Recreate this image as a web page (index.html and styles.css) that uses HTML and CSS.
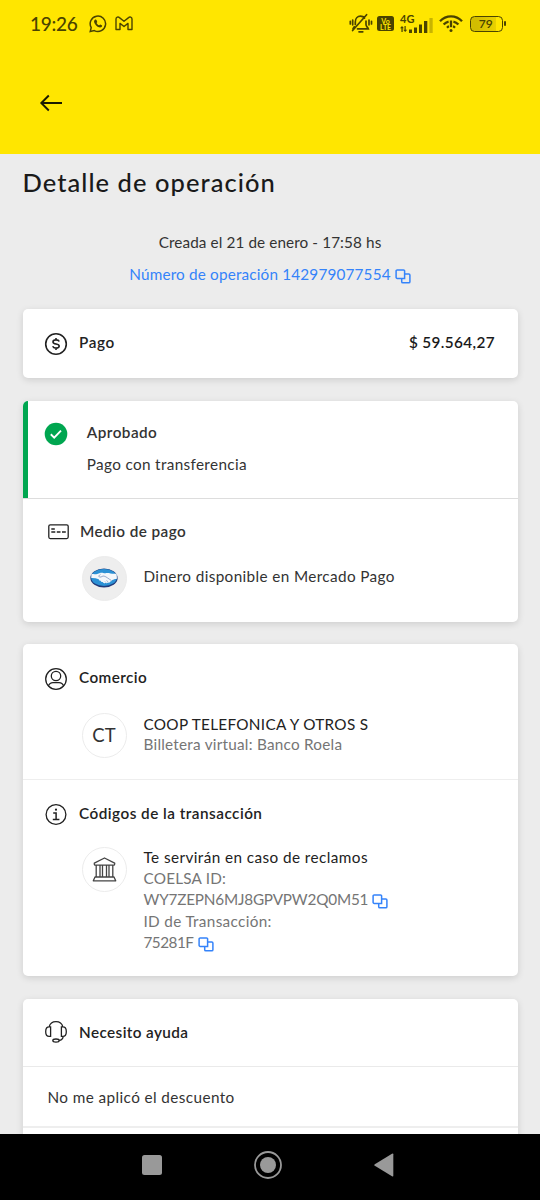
FILE: index.html
```html
<!DOCTYPE html>
<html lang="es">
<head>
<meta charset="utf-8">
<title>Detalle de operación</title>
<link rel="stylesheet" href="styles.css">
</head>
<body>
<svg class="defs" width="0" height="0" aria-hidden="true">
  <symbol id="copy" viewBox="0 0 16 15">
    <path d="M9.6 9.4H2.2a1.1 1.1 0 0 1-1.1-1.1V2.1A1.1 1.1 0 0 1 2.2 1h6.300a1.1 1.1 0 0 1 1.1 1.1zM9.6 5h4.200a1.1 1.1 0 0 1 1.1 1.1v6.600a1.1 1.1 0 0 1-1.1 1.1H7.800a1.1 1.1 0 0 1-1.1-1.1V9.400" fill="none" stroke="currentColor" stroke-width="1.5"/>
  </symbol>
</svg>
<header class="top">
  <div class="status">
    <span class="time">19:26</span>
    <svg class="wa" width="18" height="18" viewBox="0 0 18 18"><path d="M1.200 16.600l1-4A7.700 7.700 0 1 1 5.300 15.600z" fill="none" stroke="currentColor" stroke-width="1.500"/><path d="M5.900 4.800c-1.500 1.100-1 3.300 1 5.400 2.100 2.200 4.600 3 5.900 1.500.5-.7.400-1.200 0-1.400l-1.500-.8c-.5-.2-.8.8-1.300.8C9 10 7.700 8.700 7.600 8c0-.4.800-.7.600-1.300l-.7-1.600c-.2-.5-1-.7-1.600-.3z" fill="currentColor"/></svg>
    <svg class="gm" width="18" height="15" viewBox="0 0 18 15"><path d="M1 13.500V3.100C1 1 3.200.5 4.400 1.600L9 5.200l4.600-3.600C14.800.5 17 1 17 3.100v10.400h-4V7.400L9 10.500 5 7.400v6.100z" fill="none" stroke="currentColor" stroke-width="1.400" stroke-linejoin="round"/></svg>
    <span class="grow"></span>
    <svg class="bell" width="24" height="21" viewBox="0 0 24 21" fill="none" stroke="currentColor" stroke-width="1.700" stroke-linecap="round"><path d="M6.300 11.500V9c0-3.600 2.200-5.900 5.200-5.900 1.700 0 3.100.700 4 1.900M17 8v3.500c0 2 1.700 2.600 2.300 4.300H8.500M4 15.800l1.300-2M3.600 17.500L17.600 1.700M10 18.800h3.800M3.700 7v4.800M1.300 8.300v2.600M20 7v4.800M22.500 8.300v2.600"/></svg>
    <span class="volte"><b>Vo</b><b>LTE</b></span>
    <span class="signal">
      <span class="g4">4G</span>
      <svg width="33" height="18" viewBox="0 0 33 18" fill="currentColor"><path d="M2 11l2 2.300H2.700V17H1.400v-3.700H0zM5.200 17l-2-2.300h1.300V11h1.200v3.700H7.200zM9 14.500h3V18H9zM14 12.500h3V18h-3zM19 9.500h3V18h-3zM24 6h3.300v12H24z"/><path d="M29.400 3h3.300v15h-3.300z" opacity=".3"/></svg>
    </span>
    <svg class="wifi" width="24" height="18" viewBox="0 0 24 18"><g fill="none" stroke="currentColor" stroke-width="2.300"><path d="M1 6.300C7-.2 17-.2 23 6.300"/><path d="M4.600 9.500C6 8 7.700 7 9.600 6.600M14.400 6.600c1.900.4 3.600 1.400 5 2.900M8 12.700c.7-.7 1.300-1.100 2-1.300M14 11.400c.7.200 1.300.6 2 1.300"/><path d="M12 5.500v6.700"/></g><circle cx="12" cy="15.500" r="1.500" fill="currentColor"/></svg>
    <span class="battery">79</span><i class="tip"></i>
  </div>
  <svg class="back" width="24" height="18" viewBox="0 0 24 18" fill="none" stroke="#1a1a00" stroke-width="1.900"><path d="M23 9H2.500M9.800 1.500L2.300 9l7.500 7.500"/></svg>
</header>
<main>
  <h1>Detalle de operación</h1>
  <p class="created">Creada el 21 de enero - 17:58 hs</p>
  <p class="opnum"><span>Número de operación 142979077554</span><svg class="copy"><use href="#copy"/></svg></p>

  <section class="card pay">
    <svg class="ic" viewBox="0 0 24 24" fill="none" stroke="#222" stroke-width="1.600"><circle cx="12" cy="12" r="10.300"/><path d="M15.200 9.500C14.800 8.300 13.500 7.900 12 7.900c-1.700 0-3 .6-3 2 0 2.900 6.200 1.200 6.200 4.200 0 1.400-1.400 2-3.200 2-1.700 0-2.900-.6-3.300-1.800M12 6v2M12 16v2"/></svg>
    <h2 class="t-pago">Pago</h2>
    <strong class="amount">$ 59.564,27</strong>
  </section>

  <section class="card method">
    <div class="approved">
      <svg class="ic" viewBox="0 0 24 24"><circle cx="12" cy="12" r="11.300" fill="#00a650"/><path d="M6.800 12.300l3.400 3.300 6.800-6.900" fill="none" stroke="#fff" stroke-width="1.900"/></svg>
      <div><h2 class="t-apr">Aprobado</h2><p class="t-trans">Pago con transferencia</p></div>
    </div>
    <div class="source">
      <div class="head"><svg class="cardic" width="21" height="16" viewBox="0 0 21 16" fill="none" stroke="#222" stroke-width="1.300"><rect x=".8" y=".8" width="19.400" height="13.800" rx="1.500"/><path d="M3.300 5h3.500M3.300 8h4M8.800 8h3.700M14 8h3.800"/></svg><h2 class="t-medio">Medio de pago</h2></div>
      <div class="item">
        <span class="avatar mp"><svg width="28" height="20" viewBox="0 0 28 20"><ellipse cx="14" cy="10" rx="13.600" ry="9.500" fill="#223a7a"/><ellipse cx="14" cy="9.500" rx="12.900" ry="8.400" fill="#2c91d5"/><path d="M1.400 5.800c3 .8 5.400.7 8.600-.8 2.500-.8 3.700.6 5.500.2 3.500-1 6.300 1.300 11.100.2l.3 5.400c-2.300.1-3.200 1-4.700 1.300-.4 1.500-1.500 1.400-2 1.300-.5 1.300-1.500 1.500-2.200 1.100-.8 1-2 .9-2.500.3-1 1-2.500.4-2.700-.7-1.200.1-2-.4-2-1.400-1.500 0-2-.7-2-1.500-2.600-.9-5-1.400-7.500-1.200z" fill="#f4f7fb"/><path d="M10.500 6.300c-1.700 1-2.200 2.600-.6 2.800 1.700.2 2.600-1.500 4.200-1 2.600.8 4.200 2.600 7.500 4.500" fill="none" stroke="#6f88b4" stroke-width=".7"/><path d="M16 14.500l-1-1M18.300 14L16.500 12.500" fill="none" stroke="#6f88b4" stroke-width=".6"/></svg></span>
        <p class="t-dinero">Dinero disponible en Mercado Pago</p>
      </div>
    </div>
  </section>

  <section class="card shop">
    <div class="block merchant">
      <div class="head"><svg class="ic" viewBox="0 0 24 24" fill="none" stroke="#222" stroke-width="1.300"><circle cx="12" cy="12" r="10.300"/><circle cx="12" cy="9" r="4.700"/><path d="M4.300 19.200c1-2.700 2.700-3.500 4.700-3.500h6c2 0 3.700.8 4.700 3.500"/></svg><h2 class="t-com">Comercio</h2></div>
      <div class="item">
        <span class="avatar ct">CT</span>
        <div><p class="dark t-coop">COOP TELEFONICA Y OTROS S</p><p class="t-bill">Billetera virtual: Banco Roela</p></div>
      </div>
    </div>
    <div class="block codes">
      <div class="head"><svg class="ic" viewBox="0 0 24 24" fill="none" stroke="#222" stroke-width="1.300"><circle cx="12" cy="11.500" r="9.900"/><path d="M9.200 9.900h2.900v6.500M8.800 16.500h6.600" stroke-width="1.500"/><circle cx="12" cy="6.700" r="1.100" fill="#222" stroke="none"/></svg><h2 class="t-cod">Códigos de la transacción</h2></div>
      <div class="item">
        <span class="avatar"><svg width="25" height="25" viewBox="0 0 25 25" fill="none" stroke="#444" stroke-width="1.300" stroke-linejoin="round"><path d="M2.300 7v-.8L12.500 1l10.200 5.200V7c0 .9-.5 1.200-1.200 1.200h-18C2.800 8.200 2.300 7.900 2.300 7zM4.200 8.500v11.300M8 8.500v11.300M10.500 8.500v11.300M14.500 8.500v11.300M17 8.500v11.300M20.800 8.500v11.300M3 20h19l1.700 3.800H1.300z"/></svg></span>
        <div class="ids"><p class="dark t-te">Te servirán en caso de reclamos</p><p class="t-coelsa">COELSA ID:</p><p><span class="t-wy">WY7ZEPN6MJ8GPVPW2Q0M51</span><svg class="copy"><use href="#copy"/></svg></p><p class="t-id">ID de Transacción:</p><p><span class="t-752">75281F</span><svg class="copy"><use href="#copy"/></svg></p></div>
      </div>
    </div>
  </section>

  <section class="card help">
    <div class="helphead"><svg class="ic" viewBox="0 0 24 24" fill="none" stroke="#222" stroke-width="1.300"><path d="M5.200 6.700C6 3.300 8.700 1.600 12 1.600S18 3.300 18.800 6.700M6.600 6.900v9.500H5.100C2.900 16.400 1.700 15 1.700 11.700s1.200-4.800 3.400-4.800zM17.400 6.900v9.500h1.500c2.200 0 3.400-1.400 3.400-4.700s-1.200-4.800-3.400-4.800zM19.200 16.600c-.4 2.600-2 3.600-4.100 3.800"/><ellipse cx="12" cy="20.600" rx="3.200" ry="1.600"/></svg><h2 class="t-nec">Necesito ayuda</h2></div>
    <p class="option t-nome">No me aplicó el descuento</p>
    <div class="next"></div>
  </section>
</main>
<nav>
  <svg width="20" height="20" viewBox="0 0 20 20"><rect width="20" height="20" rx="2.500" fill="#999"/></svg>
  <svg width="28" height="28" viewBox="0 0 28 28"><circle cx="14" cy="14" r="13" fill="none" stroke="#999" stroke-width="1.800"/><circle cx="14" cy="14" r="8" fill="#999"/></svg>
  <svg width="20" height="24" viewBox="0 0 20 24"><path d="M.8 11.200L18 .7q1.300-.7 1.300.5v21.600q0 1.200-1.300.5L.8 12.800q-1.200-.8 0-1.600z" fill="#999"/></svg>
</nav>
</body>
</html>
```
FILE: styles.css
```css
* { box-sizing: border-box; }
body {
  margin: 0;
  width: 540px;
  height: 1200px;
  overflow: hidden;
  display: flex;
  flex-direction: column;
  background: #ececec;
  font: 15.3px/21.4px Lato, "Open Sans", sans-serif;
  color: #333;
}
h1, h2, p { margin: 0; }
svg { display: block; flex: none; }
.defs { position: absolute; }

.top { height: 153.5px; flex: none; background: #ffe600; color: #4a4300; }
.status { display: flex; align-items: center; height: 47px; padding: 0 34px 0 30px; }
.time { font-size: 19px; width: 59px; letter-spacing: -.25px; font-weight: 500; }
.gm { margin-left: 8px; }
.grow { flex: 1; }
.volte {
  display: flex; flex-direction: column; justify-content: center; align-items: center;
  width: 17px; height: 15px; margin-left: 4px; border-radius: 2.5px;
  background: #4a4300; color: #ffe600; font-size: 7px; line-height: 6px;
}
.signal { position: relative; width: 33px; height: 18px; margin: 0 0 0 6px; }
.g4 { position: absolute; left: 0; top: -1px; font-size: 11px; line-height: 9px; font-weight: 700; }
.wifi { margin-left: 6px; }
.battery {
  width: 33px; height: 16px; margin-left: 7px; padding-right: 1.5px; border: 1.5px solid #4a4300; border-radius: 4.5px;
  background: linear-gradient(90deg, #d2bd00 20%, #e9d100 80%, #ffe600 80%);
  font-size: 12px; line-height: 13px; text-align: center; font-weight: 600;
}
.tip { width: 2px; height: 5px; margin-left: 1px; border-radius: 1px; background: #4a4300; }
.back { margin: 47px 0 0 39px; }

main { flex: 1; min-height: 0; overflow: hidden; padding: 12.5px 22.5px 0; }
h1 { font-size: 25.5px; line-height: 32px; font-weight: 500; letter-spacing: 1.05px; color: #1a1a1a; }
.created { margin-top: 33.5px; text-align: center; letter-spacing: .1px; }
.opnum { display: flex; justify-content: center; margin-top: 11.5px; color: #3483fa; letter-spacing: .17px; }
.copy { width: 16px; height: 15px; margin-left: 4px; margin-top: 5px; color: #3483fa; }

.card { background: #fff; border-radius: 5px; box-shadow: 0 2px 7px rgba(0, 0, 0, .13); overflow: hidden; margin-bottom: 22.5px; }
h2 { font: inherit; font-weight: 600; color: #222; }
.ic { width: 24px; height: 24px; }
.pay { display: flex; height: 69.5px; margin-top: 23px; padding: 23px 22.5px 0 21.5px; }
.pay h2, .head .ic + h2, .helphead h2 { margin-left: 11px; }
.amount { margin-left: auto; font-weight: 600; color: #1a1a1a; letter-spacing: .38px; }
.t-pago { letter-spacing: .6px; }
.t-apr { letter-spacing: .45px; }
.t-trans { letter-spacing: .34px; }
.t-medio { letter-spacing: .42px; }
.t-dinero { letter-spacing: .37px; }
.t-com { letter-spacing: .43px; }
.t-coop { letter-spacing: .3px; }
.t-bill { letter-spacing: .24px; }
.t-cod { letter-spacing: .48px; }
.t-te { letter-spacing: .42px; }
.t-coelsa { letter-spacing: .2px; }
.t-wy { letter-spacing: -.2px; }
.t-id { letter-spacing: .33px; }
.t-752 { letter-spacing: -.5px; }
.t-nec { letter-spacing: .4px; }
.t-nome { letter-spacing: .4px; }

.approved { display: flex; height: 97px; border-left: 5.5px solid #00a650; padding: 21.5px 0 0 16px; }
.approved h2 { margin-left: 19.3px; color: #333; }
.approved p { margin: 10.5px 0 0 19.3px; }
.source { height: 124px; border-top: 1px solid #ddd; padding-top: 22px; }
.head { display: flex; padding-left: 21.5px; }
.head .cardic { margin: 3px 11px 0 4px; }
.source h2 { color: #333; }
.source .item { padding-top: 13.5px; }
.source .item p { padding-top: 10px; }
.item { display: flex; padding-left: 59px; }
.avatar {
  display: flex; flex: none; align-items: center; justify-content: center;
  width: 45px; height: 45px; margin-right: 17px; border: 1px solid #ececec; border-radius: 50%;
}
.mp { background: #eee; }
.ct { font-size: 18.5px; }

.merchant { height: 135px; padding-top: 23px; }
.merchant .item { padding-top: 21.5px; }
.merchant .item p, .ids p { color: #757575; }
.merchant .item .dark, .ids .dark { color: #222; }
.merchant .item .dark { padding-top: 1px; }
.merchant .item .t-bill { margin-top: -1px; }
.codes { border-top: 1px solid #eee; height: 197px; padding-top: 22.5px; }
.codes .item { padding-top: 20.5px; }
.ids p { display: flex; }
.ids .t-coelsa { margin-top: -1px; }

.helphead { display: flex; height: 67.5px; padding: 21.5px 0 0 21.5px; }
.helphead h2 { padding-top: 1.5px; }
.option { height: 62px; border-top: 1px solid #eaeaea; border-bottom: 2px solid #eee; padding: 20px 0 0 25px; }
.next { height: 40px; }

nav { display: flex; flex: none; height: 66.5px; padding: 17px 0 0 142px; background: #000; }
nav svg + svg { margin-left: 92px; }
nav svg:nth-child(1) { margin-top: 4.5px; }
nav svg:nth-child(3) { margin-left: 91.5px; margin-top: 2.5px; }
```
